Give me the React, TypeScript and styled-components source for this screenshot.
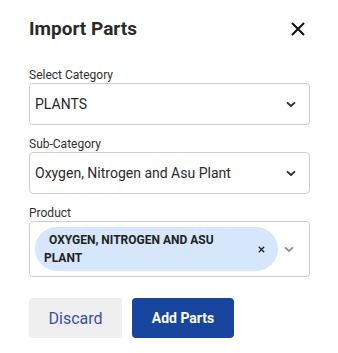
import React from "react";
import styled, { createGlobalStyle } from "styled-components";

const Global = createGlobalStyle`
  html, body { margin: 0; padding: 0; background: #fff; }
  body { font-family: Roboto, "Noto Sans", Arial, sans-serif; }
  * { box-sizing: border-box; }
`;

const Panel = styled.div`
  width: 338px;
  padding: 17px 28px 0 29px;
  display: flex;
  flex-direction: column;
`;

const Header = styled.div`
  display: flex;
  align-items: center;
  justify-content: space-between;
  height: 24px;
  margin-bottom: 26px;
`;

const Title = styled.h2`
  margin: 0;
  font-size: 19px;
  line-height: 24px;
  font-weight: 700;
  color: #2a2a2a;
`;

const CloseButton = styled.button`
  border: 0;
  background: none;
  padding: 0;
  width: 16px;
  height: 16px;
  margin-right: 4px;
  display: flex;
  align-items: center;
  justify-content: center;
  cursor: pointer;
`;

const Field = styled.div<{ $gap?: number }>`
  display: flex;
  flex-direction: column;
  margin-bottom: ${(p) => p.$gap ?? 11}px;
`;

const Label = styled.label`
  font-size: 12px;
  line-height: 16px;
  color: #2f2f2f;
`;

const SelectBox = styled.div`
  height: 42px;
  border: 1px solid #cfcfcf;
  border-radius: 4px;
  display: flex;
  align-items: center;
  justify-content: space-between;
  padding: 0 13px 0 5px;
  font-size: 14px;
  color: #2a2a2a;
`;

const MultiBox = styled.div`
  height: 56px;
  border: 1px solid #cfcfcf;
  border-radius: 4px;
  display: flex;
  align-items: center;
  padding: 0 15px 0 5px;
  gap: 6px;
`;

const Chip = styled.div`
  width: 245px;
  height: 44px;
  border-radius: 22px;
  background: #d6e6fb;
  display: flex;
  align-items: center;
  padding: 0 13px 0 9px;
`;

const ChipText = styled.span`
  flex: 1;
  margin-right: 12px;
  font-size: 12px;
  line-height: 18px;
  font-weight: 700;
  color: #222;
  text-indent: 5px;
`;

const Actions = styled.div`
  display: flex;
  gap: 10px;
  margin-top: 21px;
`;

const Button = styled.button<{ $primary?: boolean }>`
  height: 40px;
  border: 0;
  border-radius: 4px;
  font-family: inherit;
  cursor: pointer;
  padding: 0;
  width: ${(p) => (p.$primary ? 102 : 93)}px;
  background: ${(p) => (p.$primary ? "#18469e" : "#efefef")};
  color: ${(p) => (p.$primary ? "#fff" : "#3f4ca6")};
  font-size: ${(p) => (p.$primary ? 14 : 16)}px;
  font-weight: ${(p) => (p.$primary ? 700 : 400)};
`;

const Chevron = ({ color = "#2a2a2a" }: { color?: string }) => (
  <svg width="10" height="7" viewBox="0 0 10 7">
    <polyline points="1,1.4 5,5 9,1.4" fill="none" stroke={color} strokeWidth="1.8" />
  </svg>
);

export default function App() {
  return (
    <>
      <Global />
      <Panel>
        <Header>
          <Title>Import Parts</Title>
          <CloseButton aria-label="close">
            <svg width="14" height="14" viewBox="0 0 14 14">
              <path d="M1 1 L13 13 M13 1 L1 13" stroke="#111" strokeWidth="2" />
            </svg>
          </CloseButton>
        </Header>
        <Field>
          <Label>Select Category</Label>
          <SelectBox>
            <span>PLANTS</span>
            <Chevron />
          </SelectBox>
        </Field>
        <Field>
          <Label>Sub-Category</Label>
          <SelectBox>
            <span>Oxygen, Nitrogen and Asu Plant</span>
            <Chevron />
          </SelectBox>
        </Field>
        <Field $gap={0}>
          <Label>Product</Label>
          <MultiBox>
            <Chip>
              <ChipText>OXYGEN, NITROGEN AND ASU PLANT</ChipText>
              <svg width="7" height="7" viewBox="0 0 7 7">
                <path d="M0.8 0.8 L6.2 6.2 M6.2 0.8 L0.8 6.2" stroke="#222" strokeWidth="1.3" />
              </svg>
            </Chip>
            <Chevron color="#8a8f98" />
          </MultiBox>
        </Field>
        <Actions>
          <Button>Discard</Button>
          <Button $primary>Add Parts</Button>
        </Actions>
      </Panel>
    </>
  );
}
